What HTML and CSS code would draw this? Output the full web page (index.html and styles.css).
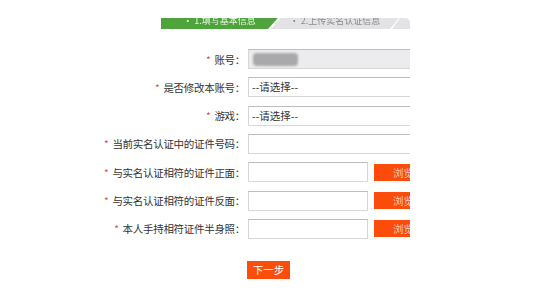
FILE: index.html
```html
<!DOCTYPE html>
<html lang="zh">
<head>
<meta charset="utf-8">
<link rel="stylesheet" href="styles.css">
</head>
<body>
<div class="page">
  <div class="tabs">
    <div class="step done"><span>• 1.填写基本信息</span></div>
    <div class="step next"><span>• 2.上传实名认证信息</span></div>
    <div class="step last"></div>
  </div>
  <div class="form">
    <label class="lbl"><i>*</i>账号：</label>
    <div class="field"><div class="box wide readonly"><span class="blur"></span></div></div>

    <label class="lbl"><i>*</i>是否修改本账号：</label>
    <div class="field"><div class="box wide">--请选择--</div></div>

    <label class="lbl"><i>*</i>游戏：</label>
    <div class="field"><div class="box wide">--请选择--</div></div>

    <label class="lbl"><i>*</i>当前实名认证中的证件号码：</label>
    <div class="field"><div class="box wide"></div></div>

    <label class="lbl"><i>*</i>与实名认证相符的证件正面：</label>
    <div class="field"><div class="box short"></div><span class="browse">浏览</span></div>

    <label class="lbl"><i>*</i>与实名认证相符的证件反面：</label>
    <div class="field"><div class="box short"></div><span class="browse">浏览</span></div>

    <label class="lbl"><i>*</i>本人手持相符证件半身照：</label>
    <div class="field"><div class="box short"></div><span class="browse">浏览</span></div>
  </div>
  <div class="actions"><span class="next-btn">下一步</span></div>
</div>
</body>
</html>
```
FILE: styles.css
```css
html, body {
  margin: 0;
  padding: 0;
  background: #fff;
}
body {
  font-family: "Noto Sans CJK SC", "Liberation Sans", sans-serif;
  color: #333;
}
.page {
  width: 410px;
  overflow: hidden;
  padding-top: 18px;
  height: 284px;
}
.tabs {
  display: flex;
  margin-left: 161px;
  width: 249px;
  height: 11px;
  overflow: hidden;
}
.step {
  height: 11px;
  flex: none;
  overflow: hidden;
  font-size: 9px;
  line-height: 9px;
  text-align: center;
  white-space: nowrap;
}
.step span {
  display: block;
  margin-top: -2px;
  filter: blur(0.4px);
}
.step.done {
  width: 117px;
  background: #4fa33d;
  color: #e9f5e4;
  clip-path: polygon(0 0, 100% 0, calc(100% - 10px) 100%, 0 100%);
}
.step.next {
  width: 128px;
  margin-left: -7px;
  background: #e3e3e6;
  color: #8a8a8e;
  clip-path: polygon(9px 0, 100% 0, calc(100% - 9px) 100%, 0 100%);
}
.step.last {
  width: 18px;
  margin-left: -7px;
  background: #e3e3e6;
  border-top-right-radius: 5px;
  clip-path: polygon(8px 0, 100% 0, 100% 100%, 0 100%);
}
.form {
  margin-top: 20px;
  display: grid;
  grid-template-columns: 248px 1fr;
  grid-auto-rows: 20px;
  row-gap: 8.33px;
}
.lbl {
  display: flex;
  align-items: center;
  justify-content: flex-end;
  padding-right: 3px;
  font-size: 10.5px;
  letter-spacing: -0.3px;
  color: #333;
  white-space: nowrap;
}
.lbl i {
  font-style: normal;
  color: #d8514c;
  font-size: 10px;
  margin-right: 4px;
}
.field {
  display: flex;
  align-items: center;
  gap: 6px;
  min-width: 0;
}
.box {
  box-sizing: border-box;
  height: 20px;
  border: 1px solid #d6d6d8;
  border-top-color: #bdbdc0;
  background: #fff;
  font-size: 10.5px;
  line-height: 18px;
  padding-left: 3px;
  color: #333;
  flex: none;
}
.box.wide {
  width: 200px;
}
.box.short {
  width: 120px;
}
.box.readonly {
  background: #ececee;
  display: flex;
  align-items: center;
  padding-left: 4px;
}
.blur {
  display: block;
  width: 45px;
  height: 13px;
  background: #a9a9ab;
  border-radius: 4px;
  filter: blur(1.2px);
}
.browse {
  flex: none;
  width: 60px;
  height: 17px;
  background: #fb4c0b;
  color: #f7c9b4;
  font-size: 10.5px;
  line-height: 17px;
  padding-left: 19px;
  box-sizing: border-box;
}
.actions {
  margin-top: 16px;
  padding-left: 247px;
}
.next-btn {
  display: inline-block;
  width: 43px;
  height: 18px;
  background: #fd4d0a;
  color: #fff;
  font-size: 10.5px;
  line-height: 18px;
  text-align: center;
}
```
